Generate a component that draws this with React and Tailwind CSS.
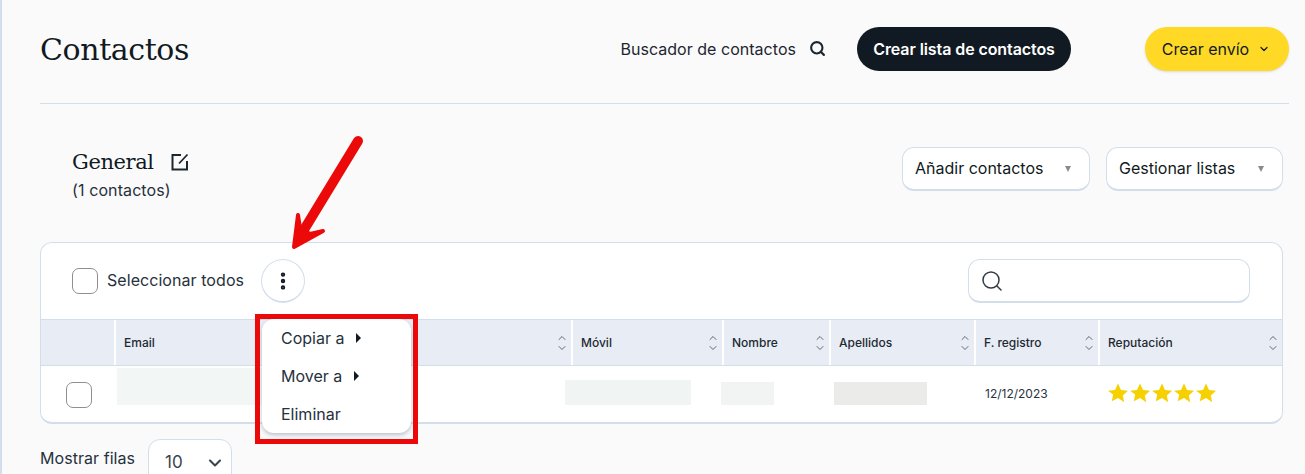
import { ChevronDown, ChevronUp, Search, EllipsisVertical } from 'lucide-react';

const columns = ['Email', 'Móvil', 'Nombre', 'Apellidos', 'F. registro', 'Reputación'];

const Caret = () => <span className="ml-auto w-0 h-0 border-x-[3.5px] border-x-transparent border-t-[6px] border-t-[#8a8a8a]" />;

const Sorter = () => (
    <span className="ml-auto flex flex-col text-[#4a525b]">
        <ChevronUp size={12} strokeWidth={1.7} className="-mb-[2px]" />
        <ChevronDown size={12} strokeWidth={1.7} />
    </span>
);

const Star = () => (
    <svg width="22" height="20" viewBox="0 0 22 20">
        <path d="M11 .5l3 6.4 7 .8-5.200 4.700 1.400 6.900L11 15l-6.200 3.300 1.400-6.900L1 7.700l7-.8z" fill="#f7d000" />
    </svg>
);

const Checkbox = ({ className }) => <span className={`block w-[26px] h-[26px] rounded-[7px] border border-[#8f8f8f] bg-white ${className}`} />;

const App = () => {
    return (
        <div className="relative h-[474px] overflow-hidden bg-[#fafafb] border-l-2 border-l-[#d3deec] pl-[38px] pr-[16px] font-['Inter',sans-serif] text-[#111a22]">
            <header className="h-[104px] border-b border-[#d3deec] flex items-center pb-[6px]">
                <h1 className="font-['DejaVu_Serif',serif] text-[30px] leading-none tracking-[-0.4px] mt-[2px]">Contactos</h1>
                <div className="ml-auto flex items-center text-[16px] text-[#1c2630] tracking-[0.03px]">
                    Buscador de contactos
                    <Search size={17} strokeWidth={3} className="ml-[13px]" />
                </div>
                <button className="ml-[31px] w-[214px] h-[44px] rounded-full bg-[#111a22] text-white text-[16px] font-semibold tracking-[-0.09px]">Crear lista de contactos</button>
                <button className="ml-[74px] w-[144px] h-[44px] pr-[2px] rounded-full bg-[#ffd925] text-[16px] flex items-center justify-center shadow-sm">
                    Crear envío
                    <ChevronDown size={12} strokeWidth={2.5} className="ml-[9px]" />
                </button>
            </header>

            <section className="flex pl-[32px] pr-[6px] pt-[43px] h-[138px]">
                <div>
                    <div className="flex items-center">
                        <h2 className="font-['DejaVu_Serif',serif] text-[21px] leading-[30px] tracking-[-0.4px]">General</h2>
                        <svg width="18" height="18" viewBox="0 0 18 18" fill="none" stroke="#1c2630" strokeWidth="2" className="ml-[17px]">
                            <path d="M10 2H1.500V16.500H16V8" />
                            <path d="M8 10.500L16.500 1.500" strokeWidth="1.800" />
                        </svg>
                    </div>
                    <p className="text-[16px] leading-[26px] text-[#26313c] tracking-[0.1px]">(1 contactos)</p>
                </div>
                <div className="ml-auto flex gap-[16px] h-[44px]">
                    <button className="w-[188px] pl-[12px] pr-[13px] pb-[2px] flex items-center bg-white rounded-[12px] border border-[#d3deec] border-b-2 text-[16px]">
                        Añadir contactos
                        <span className="ml-auto mr-[5px] mt-[2px] flex"><Caret /></span>
                    </button>
                    <button className="w-[177px] pl-[12px] pr-[13px] pb-[2px] flex items-center bg-white rounded-[12px] border border-[#d3deec] border-b-2 text-[16px]">
                        Gestionar listas
                        <span className="ml-auto mr-[5px] mt-[2px] flex"><Caret /></span>
                    </button>
                </div>
            </section>

            <div className="mr-[6px] h-[182px] bg-white rounded-[12px] border border-[#d3deec] border-b-2 overflow-hidden">
                <div className="h-[76px] flex items-center pl-[31px] pr-[32px]">
                    <Checkbox />
                    <span className="ml-[9px] mb-[2px] text-[16px] text-[#26313c] tracking-[0.06px]">Seleccionar todos</span>
                    <button className="ml-[17px] w-[44px] h-[44px] rounded-full border border-[#d3deec] border-b-2 flex items-center justify-center">
                        <EllipsisVertical size={22} strokeWidth={2.8} />
                    </button>
                    <div className="ml-auto w-[282px] h-[44px] rounded-[12px] border border-[#d3deec] border-b-2 flex items-center pl-[11px]">
                        <Search size={24} strokeWidth={1.5} className="text-[#333b44]" />
                    </div>
                </div>
                <div className="h-[47px] grid grid-cols-[73px_457px_151px_107px_145px_124px_1fr] border-y border-[#d3deec] bg-[#e8edf5] text-[12px] font-medium text-[#1e2933]">
                    <div />
                    {columns.map((name) => (
                        <div key={name} className="border-l-2 border-l-white flex items-center pl-[8px] pr-[3px]">
                            {name}
                            <Sorter />
                        </div>
                    ))}
                </div>
                <div className="h-[57px] flex items-center">
                    <Checkbox className="ml-[25px]" />
                    <div className="ml-[25px] mb-[16px] w-[160px] h-[37px] bg-[#f2f6f5]" />
                    <div className="ml-[288px] mb-[5px] w-[126px] h-[25px] bg-[#f0f5f4]" />
                    <div className="ml-[30px] mb-[3px] w-[53px] h-[23px] bg-[#f2f3f3]" />
                    <div className="ml-[60px] mb-[3px] w-[93px] h-[23px] bg-[#ebebea]" />
                    <span className="ml-[58px] mb-[2px] text-[12px] text-[#2a343e]">12/12/2023</span>
                    <div className="ml-[59px] mb-[3px] flex"><Star /><Star /><Star /><Star /><Star /></div>
                </div>
            </div>

            <div className="mt-[15px] flex items-start text-[16px] text-[#26313c] tracking-[0.05px]">
                <span className="mt-[7px]">Mostrar filas</span>
                <div className="ml-[13px] w-[84px] h-[50px] rounded-[12px] border border-[#d3deec] bg-white flex pt-[10px] pl-[16px] pr-[6px] text-[17px] text-[#3a444e]">
                    10
                    <ChevronDown size={20} strokeWidth={2.5} className="ml-auto mt-[3px]" />
                </div>
            </div>

            {/* dropdown highlighted in the screenshot */}
            <div className="absolute left-[253px] top-[314px] w-[163px] h-[130px] border-[5px] border-[#ec0909]">
                <div className="ml-[2px] w-[149px] h-[114px] bg-white rounded-[12px] shadow-[0_2px_4px_rgba(70,85,105,0.35)] pl-[19px] text-[16px] text-[#26313c]">
                    <div className="h-[38px] flex items-center">Copiar a<span className="ml-[12px] w-0 h-0 border-y-[5px] border-y-transparent border-l-[5px] border-l-[#111a22]" /></div>
                    <div className="h-[38px] flex items-center">Mover a<span className="ml-[12px] w-0 h-0 border-y-[5px] border-y-transparent border-l-[5px] border-l-[#111a22]" /></div>
                    <div className="h-[38px] flex items-center">Eliminar</div>
                </div>
            </div>

            {/* annotation arrow */}
            <svg className="absolute left-[283px] top-[130px]" width="85" height="125" viewBox="0 0 85 125" fill="none">
                <path d="M73 11L17 103" stroke="#ec0909" strokeWidth="10" strokeLinecap="round" />
                <path d="M13 85L9 117L38 101L25 104L15 98Z" fill="#ec0909" stroke="#ec0909" strokeWidth="4" strokeLinejoin="round" />
            </svg>
        </div>
    );
};

export default App;
